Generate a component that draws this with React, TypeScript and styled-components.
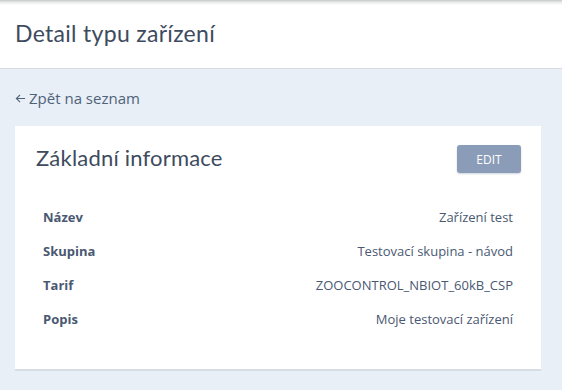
import React from "react";
import styled, { createGlobalStyle } from "styled-components";

const GlobalStyle = createGlobalStyle`
  html, body {
    margin: 0;
    padding: 0;
    background: #e8eff7;
  }
  body {
    font-family: "Open Sans", "Liberation Sans", sans-serif;
    color: #46556b;
  }
`;

const Page = styled.div`
  min-height: 390px;
  background: #e8eff7;
`;

const Header = styled.header`
  height: 69px;
  box-sizing: border-box;
  background: linear-gradient(to bottom, #c4c6c9 0px, #e6e7e8 2px, #ffffff 5px);
  border-bottom: 1px solid #d6dce3;
  display: flex;
  align-items: center;
  padding: 0 15px 3px;
`;

const PageTitle = styled.h1`
  margin: 0;
  font-family: Lato, "Open Sans", sans-serif;
  font-weight: 400;
  font-size: 23px;
  color: #3e4b5e;
  letter-spacing: 0.3px;
`;

const Main = styled.main`
  padding: 17px 21px 20px 15px;
`;

const BackLink = styled.a`
  display: inline-flex;
  align-items: center;
  gap: 3px;
  font-size: 15px;
  color: #4f6279;
  text-decoration: none;
  cursor: pointer;
  height: 24px;
`;

const Card = styled.section`
  margin-top: 16px;
  background: #ffffff;
  box-shadow: 0 2px 0 #d7dde4;
  padding: 19px 20px 33px 21px;
`;

const CardHead = styled.div`
  display: flex;
  justify-content: space-between;
  align-items: center;
  height: 28px;
`;

const CardTitle = styled.h2`
  margin: 0 0 4px;
  font-family: Lato, "Open Sans", sans-serif;
  font-weight: 400;
  font-size: 22px;
  color: #3e4b5e;
  letter-spacing: 0.2px;
`;

const EditButton = styled.button`
  width: 64px;
  height: 28px;
  border: none;
  border-radius: 3px;
  background: #8a9cb7;
  color: #ffffff;
  font-family: "Open Sans", sans-serif;
  font-size: 12px;
  box-shadow: 0 1px 2px rgba(60, 75, 100, 0.25);
  cursor: pointer;
`;

const InfoList = styled.dl`
  margin: 27px 8px 0 7px;
  display: grid;
  grid-template-columns: auto 1fr;
  row-gap: 0;
`;

const Label = styled.dt`
  font-weight: 700;
  font-size: 13px;
  color: #4a5872;
  line-height: 34px;
`;

const Value = styled.dd`
  margin: 0;
  text-align: right;
  font-size: 13px;
  color: #4a5872;
  line-height: 34px;
`;

const rows: [string, string][] = [
  ["Název", "Zařízení test"],
  ["Skupina", "Testovací skupina - návod"],
  ["Tarif", "ZOOCONTROL_NBIOT_60kB_CSP"],
  ["Popis", "Moje testovací zařízení"],
];

export default function App() {
  return (
    <Page>
      <GlobalStyle />
      <Header>
        <PageTitle>Detail typu zařízení</PageTitle>
      </Header>
      <Main>
        <BackLink>
          <svg width="11" height="11" viewBox="0 0 12 12" fill="none" stroke="#4f6279" strokeWidth="1.2">
            <path d="M11 6H1.5M5.5 2L1.5 6l4 4" />
          </svg>
          Zpět na seznam
        </BackLink>
        <Card>
          <CardHead>
            <CardTitle>Základní informace</CardTitle>
            <EditButton>EDIT</EditButton>
          </CardHead>
          <InfoList>
            {rows.map(([k, v]) => (
              <React.Fragment key={k}>
                <Label>{k}</Label>
                <Value>{v}</Value>
              </React.Fragment>
            ))}
          </InfoList>
        </Card>
      </Main>
    </Page>
  );
}
